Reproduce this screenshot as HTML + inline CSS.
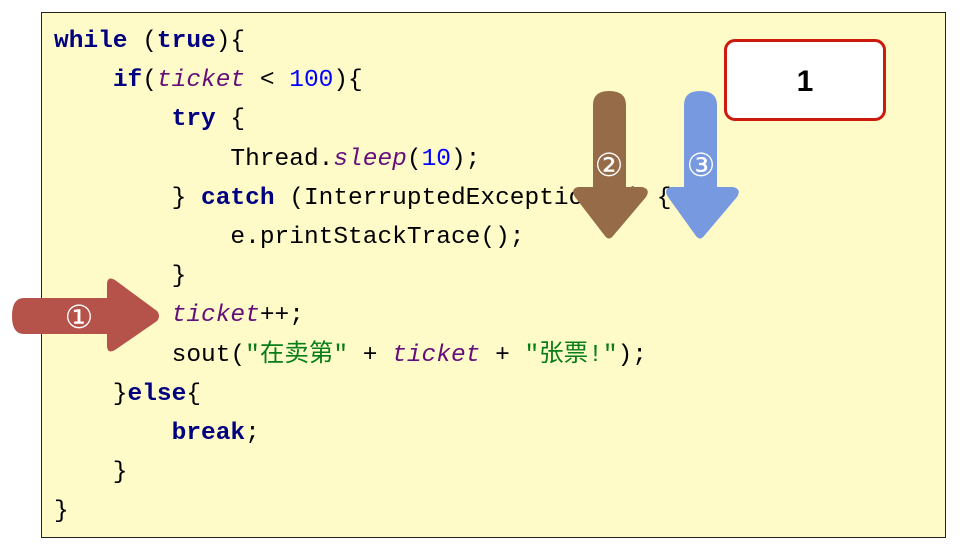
<!DOCTYPE html>
<html><head><meta charset="utf-8"><style>
body{margin:0;width:964px;height:553px;background:#fff;position:relative;overflow:hidden}
#box{position:absolute;left:41px;top:12px;width:903px;height:524px;background:#fffbc9;border:1.5px solid #222}
pre{position:absolute;left:54px;top:22px;margin:0;font-family:"Liberation Mono","Noto Sans CJK SC",monospace;font-size:24.5px;line-height:39.2px;color:#000}
.k{color:#000080;font-weight:bold}.v{color:#660e7a;font-style:italic}.n{color:#0000ff}.s{color:#067d17}
svg{position:absolute;left:0;top:0}
#r{position:absolute;left:724px;top:39px;width:156px;height:76px;border:3px solid #cc1a0e;border-radius:11px;background:#fff;font:bold 30px "Liberation Sans",sans-serif;text-align:center;line-height:80px}
</style></head><body>
<div id="box"></div>
<pre><span class="k">while</span> (<span class="k">true</span>){
    <span class="k">if</span>(<span class="v">ticket</span> &lt; <span class="n">100</span>){
        <span class="k">try</span> {
            Thread.<span class="v">sleep</span>(<span class="n">10</span>);
        } <span class="k">catch</span> (InterruptedException e) {
            e.printStackTrace();
        }
        <span class="v">ticket</span>++;
        sout(<span class="s">"在卖第"</span> + <span class="v">ticket</span> + <span class="s">"张票!"</span>);
    }<span class="k">else</span>{
        <span class="k">break</span>;
    }
}</pre>
<svg width="964" height="553">
<path d="M24 298 H107 V283 Q108 276 115 280 L157 311 Q161 316 157 321 L115 350 Q108 354 107 347 V334 H24 Q12 334 12 316 Q12 298 24 298Z" fill="#b5524a"/>
<text x="79" y="328" font-family="DejaVu Sans,sans-serif" font-size="32" fill="#fff" text-anchor="middle">①</text>
<path d="M593 105 Q593 91 609 91 Q626 91 626 105 V187 H642 Q651 189 646 197 L613 236 Q609 241 605 236 L575 197 Q570 189 578 187 H593Z" fill="#966b47"/>
<text x="609" y="176" font-family="DejaVu Sans,sans-serif" font-size="32" fill="#fff" text-anchor="middle">②</text>
<path d="M684 105 Q684 91 700 91 Q717 91 717 105 V187 H733 Q742 189 737 197 L704 236 Q700 241 696 236 L668 197 Q663 189 671 187 H684Z" fill="#7799e0"/>
<text x="701" y="176" font-family="DejaVu Sans,sans-serif" font-size="32" fill="#fff" text-anchor="middle">③</text>
</svg>
<div id="r">1</div>
</body></html>
